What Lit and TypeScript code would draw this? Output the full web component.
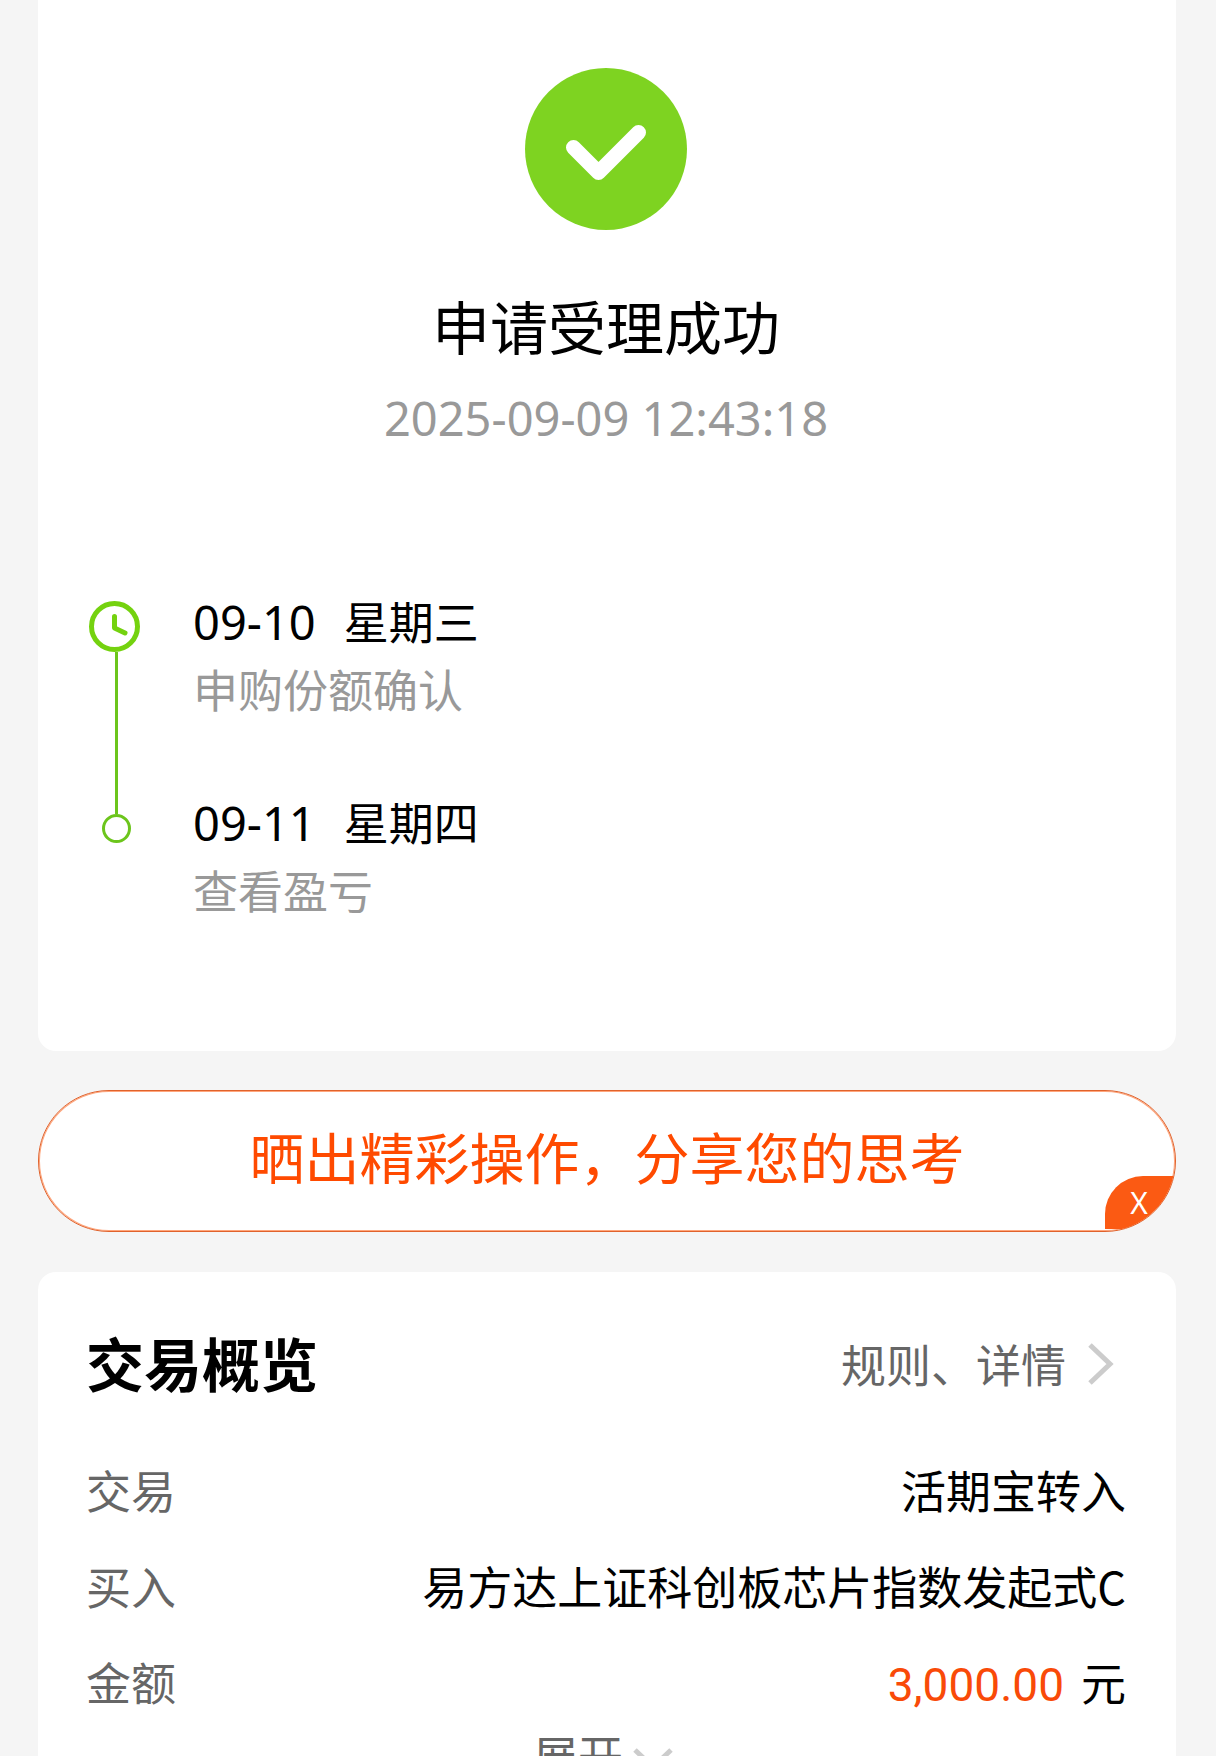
import { LitElement, html, css, svg, nothing } from "lit";
import { customElement, state } from "lit/decorators.js";

interface Step {
  date: string;
  weekday: string;
  note: string;
}

const STEPS: Step[] = [
  { date: "09-10", weekday: "星期三", note: "申购份额确认" },
  { date: "09-11", weekday: "星期四", note: "查看盈亏" },
];

const successIcon = html`<svg class="success" viewBox="0 0 162 162" aria-hidden="true">
  ${svg`<circle cx="81" cy="81" r="81" fill="#7ed321" />
  <path d="M48.500 79.500 L73.500 104.500 L113.500 64.500" fill="none" stroke="#fff" stroke-width="15" stroke-linecap="round" stroke-linejoin="round" />`}
</svg>`;

const clockIcon = html`<svg class="clock" viewBox="0 0 51 51" aria-hidden="true">
  ${svg`<circle cx="25.500" cy="25.500" r="23" fill="none" stroke="#74d20f" stroke-width="5" />
  <path d="M25.500 15.500 V27 L36 32" fill="none" stroke="#74d20f" stroke-width="5" stroke-linecap="round" stroke-linejoin="round" />`}
</svg>`;

const rightChevron = html`<svg class="chevron-right" viewBox="0 0 26 44" aria-hidden="true">
  ${svg`<path d="M2 3 L22 22 L2 41" fill="none" stroke="#ccc" stroke-width="5" />`}
</svg>`;

const downChevron = html`<svg class="chevron-down" viewBox="0 0 40 26" aria-hidden="true">
  ${svg`<path d="M2 4 L20 21 L38 4" fill="none" stroke="#ccc" stroke-width="5" />`}
</svg>`;

@customElement("order-timeline")
export class OrderTimeline extends LitElement {
  static styles = css`
    :host {
      display: block;
    }
    .steps {
      margin: 0;
      padding: 0;
      list-style: none;
    }
    .step {
      display: grid;
      grid-template-columns: 61px 1fr;
      column-gap: 46px;
    }
    .rail {
      display: flex;
      flex-direction: column;
      align-items: center;
    }
    .rail.first {
      padding-top: 15px;
    }
    .clock {
      width: 51px;
      height: 51px;
      margin-right: 4px;
      flex: none;
    }
    .line {
      width: 3px;
      flex: 1;
      background: #6cc51c;
    }
    .line.lead {
      flex: none;
      height: 27px;
    }
    .dot {
      box-sizing: border-box;
      width: 29px;
      height: 29px;
      border: 3px solid #6cc51c;
      border-radius: 50%;
    }
    .body {
      font-size: 45px;
    }
    .step:not(:last-child) .body {
      padding-bottom: 65px;
    }
    .when {
      display: flex;
      align-items: baseline;
      gap: 28px;
      line-height: 70px;
      color: #000;
    }
    .date {
      font-family: "Noto Sans", "Noto Sans CJK SC", sans-serif;
      font-size: 47px;
      line-height: 1;
    }
    .note {
      line-height: 66px;
      color: #999;
    }
  `;

  render() {
    return html`<ol class="steps">
      ${STEPS.map(
        (step, i) => html`<li class="step">
          <div class="rail ${i === 0 ? "first" : ""}">
            ${i === 0
              ? html`${clockIcon}<span class="line"></span>`
              : html`<span class="line lead"></span><span class="dot"></span>`}
          </div>
          <div class="body">
            <div class="when"><time class="date">${step.date}</time><span>${step.weekday}</span></div>
            <div class="note">${step.note}</div>
          </div>
        </li>`
      )}
    </ol>`;
  }
}

@customElement("app-root")
export class AppRoot extends LitElement {
  @state() private bannerOpen = true;

  static styles = css`
    :host {
      display: block;
      box-sizing: border-box;
      height: 100vh;
      overflow-y: auto;
      scrollbar-width: none;
      padding: 0 40px 40px 38px;
      background: #f5f5f5;
      color: #000;
      font-family: "Noto Sans CJK SC", sans-serif;
      font-size: 45px;
    }
    button {
      margin: 0;
      padding: 0;
      border: 0;
      background: none;
      font: inherit;
      color: inherit;
      cursor: pointer;
    }
    .card {
      background: #fff;
      border-radius: 18px;
    }
    .result {
      border-top-left-radius: 0;
      border-top-right-radius: 0;
      padding: 68px 50px 128px 48px;
    }
    .status {
      display: flex;
      flex-direction: column;
      align-items: center;
      margin-bottom: 136px;
    }
    .success {
      width: 162px;
      height: 162px;
    }
    .title {
      margin: 55px 0 21px;
      font-size: 58px;
      line-height: 80px;
      font-weight: 400;
    }
    .time {
      font-family: "Noto Sans", "Noto Sans CJK SC", sans-serif;
      font-size: 47px;
      line-height: 64px;
      color: #999;
    }
    .banner {
      position: relative;
      display: flex;
      margin: 39px 0 40px;
      overflow: hidden;
      border: 1px solid #e0622c;
      border-radius: 71px;
      background: #fff;
      box-shadow: inset 0 0 0 1px #ffa67c;
    }
    .share {
      flex: 1;
      padding: 24px 0 36px;
      font-size: 55px;
      line-height: 80px;
      color: #ff4a00;
    }
    .close {
      position: absolute;
      right: 0;
      bottom: 2px;
      width: 70px;
      height: 53px;
      padding-right: 2px;
      border-top-left-radius: 38px;
      background: #fb5a13;
      color: #fff;
      font-family: "Noto Sans", sans-serif;
      font-size: 30px;
      font-weight: 400;
      line-height: 53px;
    }
    .overview {
      padding: 50px 50px 48px 48px;
    }
    .head {
      display: flex;
      align-items: center;
      justify-content: space-between;
      margin-bottom: 40px;
    }
    .heading {
      margin: 0;
      font-size: 58px;
      line-height: 80px;
      font-weight: 700;
    }
    .more {
      display: flex;
      align-items: center;
      gap: 22px;
      padding: 4px 12px 0 0;
      color: #666;
      line-height: 68px;
      text-decoration: none;
    }
    .chevron-right {
      width: 26px;
      height: 44px;
    }
    .rows {
      margin: 0;
    }
    .row {
      display: flex;
      justify-content: space-between;
      line-height: 96px;
    }
    .label {
      color: #666;
    }
    .value {
      display: flex;
      align-items: baseline;
      gap: 17px;
      margin: 0;
    }
    .amount {
      font-family: Roboto, sans-serif;
      font-size: 46px;
      line-height: 1;
      color: #f94a08;
    }
    .expand {
      display: flex;
      align-items: center;
      gap: 10px;
      margin: 0 auto;
      padding-right: 6px;
      color: #666;
      line-height: 50px;
    }
    .chevron-down {
      width: 40px;
      height: 26px;
      margin-top: 8px;
    }
  `;

  render() {
    return html`
      <section class="card result">
        <div class="status">
          ${successIcon}
          <h1 class="title">申请受理成功</h1>
          <time class="time">2025-09-09 12:43:18</time>
        </div>
        <order-timeline></order-timeline>
      </section>
      ${this.bannerOpen
        ? html`<div class="banner">
            <button class="share" type="button">晒出精彩操作，分享您的思考</button>
            <button class="close" type="button" @click=${() => (this.bannerOpen = false)}>X</button>
          </div>`
        : nothing}
      <section class="card overview">
        <div class="head">
          <h2 class="heading">交易概览</h2>
          <a class="more" href="#details">规则、详情${rightChevron}</a>
        </div>
        <dl class="rows">
          <div class="row"><dt class="label">交易</dt><dd class="value">活期宝转入</dd></div>
          <div class="row"><dt class="label">买入</dt><dd class="value">易方达上证科创板芯片指数发起式C</dd></div>
          <div class="row">
            <dt class="label">金额</dt>
            <dd class="value"><span class="amount">3,000.00</span><span>元</span></dd>
          </div>
        </dl>
        <button class="expand" type="button">展开${downChevron}</button>
      </section>
    `;
  }
}
